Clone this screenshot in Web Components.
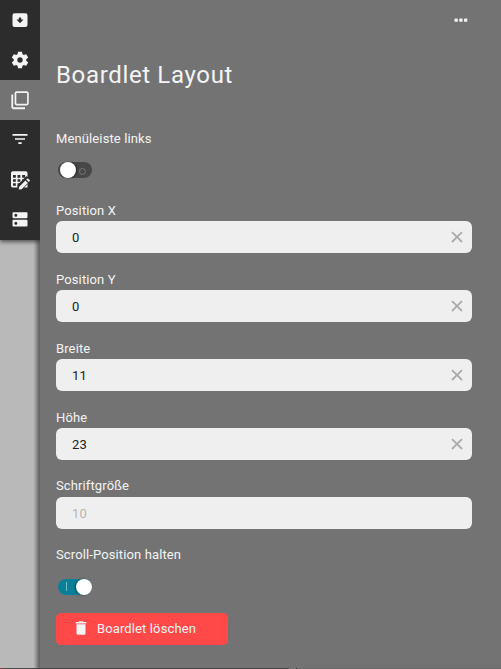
<!DOCTYPE html>
<html lang="de">
<head>
<meta charset="utf-8">
<title>Boardlet Layout</title>
<style>
body { margin: 0; font: 13px/21px Roboto, "Liberation Sans", sans-serif; letter-spacing: .12px; color: #f4f4f4; }
</style>
</head>
<body>
<settings-app></settings-app>
<script>
const icons = {
  archive: '<path d="M5.500 4h13A2.500 2.500 0 0 1 21 6.500v11.500a2.500 2.500 0 0 1-2.500 2.500h-13A2.500 2.500 0 0 1 3 18v-11.500A2.500 2.500 0 0 1 5.500 4ZM10.600 9v2.400H7.800l4.200 4.400 4.200-4.400h-2.800V9Z"/>',
  gear: '<path d="M19.43 12.98c.04-.32.07-.64.07-.98s-.03-.66-.07-.98l2.11-1.65c.19-.15.24-.42.12-.64l-2-3.46c-.12-.22-.39-.3-.61-.22l-2.49 1c-.52-.4-1.08-.73-1.69-.98l-.38-2.65C14.46 2.18 14.25 2 14 2h-4c-.25 0-.46.18-.49.42l-.38 2.65c-.61.25-1.17.59-1.69.98l-2.49-1c-.23-.09-.49 0-.61.22l-2 3.46c-.13.22-.07.49.12.64l2.11 1.65c-.04.32-.07.65-.07.98s.03.66.07.98l-2.11 1.65c-.19.15-.24.42-.12.64l2 3.46c.12.22.39.3.61.22l2.49-1c.52.4 1.08.73 1.69.98l.38 2.65c.03.24.24.42.49.42h4c.25 0 .46-.18.49-.42l.38-2.65c.61-.25 1.17-.59 1.69-.98l2.49 1c.23.09.49 0 .61-.22l2-3.46c.12-.22.07-.49-.12-.64ZM12 15.2a3.2 3.2 0 1 1 0-6.4 3.2 3.2 0 0 1 0 6.4Z"/>',
  layers: '<path d="M3.800 5.500H1.600V20.500a2.500 2.500 0 0 0 2.500 2.500H18v-2.200H3.800ZM20 1.500H8A2.500 2.500 0 0 0 5.500 4v12A2.500 2.500 0 0 0 8 18.500h12a2.500 2.500 0 0 0 2.500-2.500V4A2.500 2.500 0 0 0 20 1.500Zm.5 15H7.600V3.600h12.900Z"/>',
  filter: '<path d="M3 6h18v2H3ZM6 11h12v2H6ZM10 16h4v2h-4Z"/>',
  table: '<path d="M3.400 1.500h15.400a2.200 2.200 0 0 1 2.200 2.200V21H3.400a2.200 2.200 0 0 1-2.200-2.200V3.700a2.200 2.200 0 0 1 2.200-2.200ZM3.600 6h3.400v3.200H3.600ZM9 6h3.400v3.200H9ZM14.600 6h3.600v3.200h-3.600ZM3.600 11h3.400v3.200H3.600ZM9 11h3.400v3.200H9ZM14.600 11h3.600v3.200h-3.600ZM3.600 16h3.400v3H3.600ZM9 16h3.400v3H9Z"/><path d="M9 24v-6L19.500 7.500 24 9v5L14 24Z" fill="#2c2c2c"/><path d="m11 20 7.500-7.500 3 3L14 23l-3.500.4ZM19.500 11.500l1-1q.8-.8 1.600 0l1.400 1.400q.8.8 0 1.600l-1 1Z"/>',
  storage: '<path d="M20 13H4a1 1 0 0 0-1 1v6c0 .6.4 1 1 1h16c.6 0 1-.4 1-1v-6c0-.6-.4-1-1-1ZM7 18.800a1.800 1.800 0 1 1 0-3.600 1.800 1.800 0 0 1 0 3.600ZM20 4H4a1 1 0 0 0-1 1v5c0 .6.4 1 1 1h16c.6 0 1-.4 1-1V5c0-.6-.4-1-1-1ZM7 9.300a1.800 1.800 0 1 1 0-3.600 1.800 1.800 0 0 1 0 3.600Z"/>',
  close: '<path d="M19.500 6.200 17.800 4.500 12 10.300 6.200 4.500 4.500 6.200l5.800 5.800-5.800 5.800 1.700 1.700 5.800-5.800 5.800 5.800 1.700-1.700-5.800-5.800Z"/>',
  trash: '<path d="M6 19a2 2 0 0 0 2 2h8a2 2 0 0 0 2-2V7H6ZM19 4h-3.500l-1-1h-5l-1 1H5v2h14Z"/>',
  more: '<rect x="4.200" y="10.300" width="4" height="3.800" rx="1"/><rect x="9.900" y="10.300" width="4" height="3.800" rx="1"/><rect x="15.600" y="10.300" width="4" height="3.800" rx="1"/>'
};
function define(name, render) {
  customElements.define(name, class extends HTMLElement {
    connectedCallback() {
      if (this.shadowRoot) return;
      this.attachShadow({ mode: 'open' }).innerHTML = render(this);
    }
  });
}
define('ui-icon', el => `<style>
  :host { display: block; width: var(--size, 20px); height: var(--size, 20px); flex: none; }
  svg { display: block; width: 100%; height: 100%; fill: currentColor; fill-rule: evenodd; }
</style><svg viewBox="0 0 24 24">${icons[el.getAttribute('name')]}</svg>`);

define('nav-item', el => `<style>
  :host { display: flex; align-items: center; justify-content: center; box-sizing: border-box; width: 40px; height: 40px; padding-bottom: ${el.getAttribute('lift') || 1}px; }
  :host([active]) { background: #737373; }
</style><ui-icon name="${el.getAttribute('icon')}"></ui-icon>`);

define('side-bar', () => `<style>
  :host { display: block; width: 40px; background: linear-gradient(90deg, #b9b9b9 33px, #a6a6a6 35px, #777 38px, #606060 40px); }
  nav { background: #2c2c2c; box-shadow: 0 2px 4px rgba(0,0,0,.55); clip-path: inset(0 0 -10px 0); }
</style><nav><slot></slot></nav>`);

define('toggle-switch', () => `<style>
  :host { display: flex; justify-content: space-between; align-items: center; box-sizing: border-box; width: 34px; height: 16px; margin-left: 2px; padding-left: 2px; border-radius: 8px; background: #474747; }
  .knob { width: 16px; height: 16px; border-radius: 50%; background: #fff; box-shadow: 1px 0 2px rgba(0,0,0,.5); }
  .mark { box-sizing: border-box; width: 7px; height: 7px; margin: 2px 6px 0 0; border: 1px solid #777; border-radius: 50%; }
  :host([on]) { padding-left: 0; background: #0b7f98; flex-direction: row-reverse; }
  :host([on]) .knob { box-shadow: -1px 0 2px rgba(0,0,0,.5); }
  :host([on]) .mark { width: 1px; height: 9px; margin: 0 0 1px 8px; border: 0; border-radius: 0; background: #78bac8; }
</style><span class="knob"></span><span class="mark"></span>`);

define('toggle-field', () => `<style>
  :host { display: block; }
  .label { height: 21px; margin-bottom: 13px; }
</style><div class="label"><slot></slot></div><slot name="control"></slot>`);

define('number-field', el => `<style>
  :host { display: block; margin-bottom: 16px; }
  .label { height: 21px; }
  :host([muted]) .label { line-height: 19px; }
  .box { display: flex; align-items: center; justify-content: space-between; box-sizing: border-box; height: 32px; padding: 0 6px 0 16px; border-radius: 6px; background: #efefef; color: #222; }
  :host([muted]) .box { color: #b5b5b5; }
  ui-icon { --size: 18px; color: #aaa; }
</style><div class="label"><slot></slot></div>
<div class="box"><span>${el.getAttribute('value')}</span>${el.hasAttribute('muted') ? '' : '<ui-icon name="close"></ui-icon>'}</div>`);

define('danger-button', () => `<style>
  :host { display: flex; align-items: center; box-sizing: border-box; width: 172px; height: 32px; padding: 0 16px 2px; gap: 7px; border-radius: 5px; background: #ff4848; }
  ui-icon { --size: 18px; }
</style><ui-icon name="trash"></ui-icon><slot></slot>`);

define('layout-panel', () => `<style>
  :host { display: block; box-sizing: border-box; padding: 0 29px 0 16px; background: #737373; }
  header { display: flex; justify-content: flex-end; padding: 10px 1px 0 0; height: 20px; }
  h1 { margin: 30px 0 38px; font-size: 24px; line-height: 30px; font-weight: 400; letter-spacing: .65px; }
  .first { margin-bottom: 22px; }
  .last { line-height: 19px; }
  danger-button { margin-top: 18px; }
</style>
<header><ui-icon name="more"></ui-icon></header>
<h1>Boardlet Layout</h1>
<toggle-field class="first">Menüleiste links<toggle-switch slot="control"></toggle-switch></toggle-field>
<number-field value="0">Position X</number-field>
<number-field value="0">Position Y</number-field>
<number-field value="11">Breite</number-field>
<number-field value="23">Höhe</number-field>
<number-field value="10" muted>Schriftgröße</number-field>
<toggle-field class="last">Scroll-Position halten<toggle-switch slot="control" on></toggle-switch></toggle-field>
<danger-button>Boardlet löschen</danger-button>`);

define('settings-app', () => `<style>
  :host { display: grid; grid-template: 668px 1px / 40px 461px; height: 669px; overflow: hidden; }
  footer { grid-column: 1 / -1; background: linear-gradient(90deg, #743c3c 5px, #454545 5px 289px, #737373 289px 296px, #222 296px 297px, #6d686a 297px); }
</style>
<side-bar>
  <nav-item icon="archive"></nav-item>
  <nav-item icon="gear"></nav-item>
  <nav-item icon="layers" active></nav-item>
  <nav-item icon="filter" lift="2"></nav-item>
  <nav-item icon="table"></nav-item>
  <nav-item icon="storage" lift="2"></nav-item>
</side-bar>
<layout-panel></layout-panel>
<footer></footer>`);
</script>
</body>
</html>
